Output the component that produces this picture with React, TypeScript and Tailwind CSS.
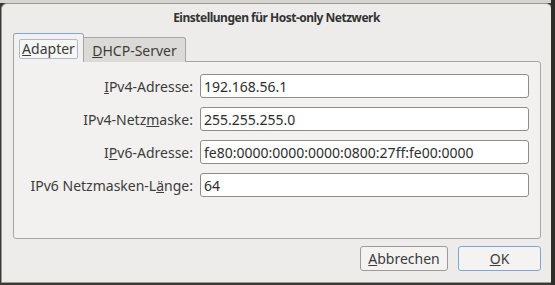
import React from "react";

const FONT = { fontFamily: '"Noto Sans", "Open Sans", "DejaVu Sans", sans-serif' };

const ROWS = [
  { pre: "", key: "I", post: "Pv4-Adresse:", value: "192.168.56.1" },
  { pre: "IPv4-Netz", key: "m", post: "aske:", value: "255.255.255.0" },
  { pre: "I", key: "P", post: "v6-Adresse:", value: "fe80:0000:0000:0000:0800:27ff:fe00:0000" },
  { pre: "IPv6 Netzmasken-L", key: "ä", post: "nge:", value: "64" },
];

export default function App() {
  return (
    <div className="w-[555px] h-[285px] bg-[#3a3935] overflow-hidden relative" style={FONT}>
      {/* window behind */}
      <div className="h-[3px] bg-[#d6d4cf]" />
      <div className="absolute top-0 right-0 w-[4px] h-full bg-[#2e2d2a]" />

      {/* dialog */}
      <div className="ml-[1px] w-[551px] h-[280px] bg-[#edeceb] border border-[#9a9996] rounded-t-[6px] flex flex-col">
        <div className="h-[27px] flex items-center justify-center text-[12px] tracking-[-0.5px] font-bold text-[#333333]">
          Einstellungen für Host-only Netzwerk
        </div>

        {/* tabs */}
        <div className="flex items-end ml-[11px] mt-[2px] h-[29px] relative z-10">
          <div className="w-[71px] h-[29px] bg-[#f2f1f0] border border-[#a8a6a2] border-t-[#7fa7d6] border-b-0 rounded-t-[3px] flex items-center justify-center pt-[1px]">
            <span className="px-[2px] h-[20px] flex items-center border border-[#a9bcd6] rounded-[2px] bg-[#f6f6f5] text-[14px] text-[#3c3c3c]">
              <u>A</u>dapter
            </span>
          </div>
          <div className="w-[102px] h-[25px] bg-[#dcdad6] border border-[#a8a6a2] border-l-0 border-b-0 rounded-tr-[3px] flex items-center justify-center text-[14px] text-[#3c3c3c]">
            <span>
              <u>D</u>HCP-Server
            </span>
          </div>
        </div>

        {/* panel */}
        <div className="ml-[11px] mr-[10px] -mt-[1px] h-[178px] bg-[#f2f1f0] border border-[#a8a6a2] rounded-b-[3px] rounded-tr-[3px] pt-[12px] pr-[11px]">
          <div className="grid grid-cols-[179px_1fr] gap-x-[7px] gap-y-[9px] items-center">
            {ROWS.map((r) => (
              <React.Fragment key={r.value}>
                <div className="text-right text-[14px] text-[#3c3c3c] whitespace-nowrap">
                  {r.pre}
                  <u>{r.key}</u>
                  {r.post}
                </div>
                <div className="h-[24px] bg-white border border-[#8f8d89] rounded-[3px] flex items-center px-[3px] text-[14px] text-[#2e2e2e]">
                  {r.value}
                </div>
              </React.Fragment>
            ))}
          </div>
        </div>

        {/* buttons */}
        <div className="flex justify-end gap-[10px] mr-[10px] mt-[7px]">
          <button className="w-[88px] h-[25px] bg-[#f4f3f2] border border-[#9d9b97] rounded-[3px] text-[14px] text-[#3c3c3c] flex items-center justify-center">
            <span>
              <u>A</u>bbrechen
            </span>
          </button>
          <button className="w-[83px] h-[25px] bg-[#f4f3f2] border border-[#7fa7d6] rounded-[3px] text-[14px] text-[#3c3c3c] flex items-center justify-center">
            <span>
              <u>O</u>K
            </span>
          </button>
        </div>
      </div>
    </div>
  );
}
